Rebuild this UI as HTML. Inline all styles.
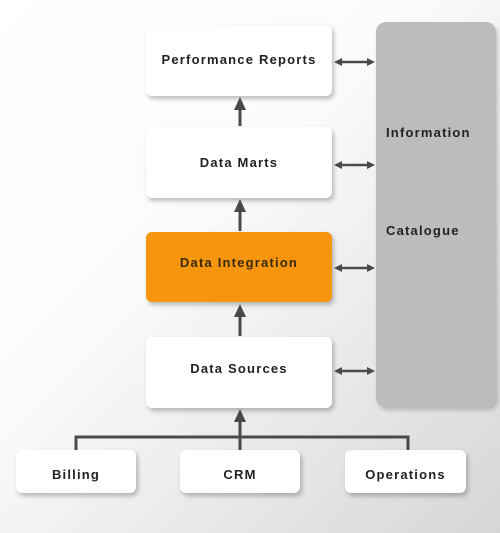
<!DOCTYPE html>
<html><head><style>
body{margin:0;width:500px;height:533px;overflow:hidden;background:linear-gradient(135deg,#ffffff 0%,#fbfbfb 40%,#d6d6d6 100%);font-family:"Liberation Sans",sans-serif;position:relative}
.b{position:absolute;background:#fff;border-radius:6px;box-shadow:2px 3px 5px rgba(0,0,0,.25);display:flex;align-items:center;justify-content:center;font-weight:bold;font-size:13px;letter-spacing:1.2px;color:#222;box-sizing:border-box}
.o{background:#f7960c;color:#3a2a10}
.g{position:absolute;left:376px;top:22px;width:120px;height:385px;background:#bcbcbc;border-radius:10px;box-shadow:2px 3px 5px rgba(0,0,0,.2)}
.t{position:absolute;left:386px;font-weight:bold;font-size:13px;letter-spacing:1.2px;color:#222}
svg{position:absolute;left:0;top:0}
</style></head><body>
<div class="b" style="left:146px;top:25px;width:186px;height:71px;padding-bottom:2px">Performance Reports</div>
<div class="b" style="left:146px;top:127px;width:186px;height:71px">Data Marts</div>
<div class="b o" style="left:146px;top:232px;width:186px;height:70px;padding-bottom:10px">Data Integration</div>
<div class="b" style="left:146px;top:337px;width:186px;height:71px;padding-bottom:8px">Data Sources</div>
<div class="b" style="left:16px;top:450px;width:120px;height:43px;padding-top:6px">Billing</div>
<div class="b" style="left:180px;top:450px;width:120px;height:43px;padding-top:6px">CRM</div>
<div class="b" style="left:345px;top:450px;width:121px;height:43px;padding-top:6px">Operations</div>
<div class="g"></div>
<div class="t" style="top:125px">Information</div>
<div class="t" style="top:223px">Catalogue</div>
<svg width="500" height="533" fill="#4a4a4a" stroke="#4a4a4a">
<g stroke-width="3" fill="none">
<path d="M240 126V108M240 231V210M240 336V315M240 450V420M76 450V437H408V450"/>
</g>
<g stroke="none">
<path d="M234 110L240 97L246 110Z"/><path d="M234 212L240 199L246 212Z"/><path d="M234 317L240 304L246 317Z"/><path d="M234 422L240 409L246 422Z"/>
</g>
<g stroke-width="2.5">
<line x1="340" y1="62" x2="370" y2="62"/><line x1="340" y1="165" x2="370" y2="165"/><line x1="340" y1="268" x2="370" y2="268"/><line x1="340" y1="371" x2="370" y2="371"/>
</g>
<g stroke="none">
<path d="M334 62L342 58V66Z M375 62L367 58V66Z"/>
<path d="M334 165L342 161V169Z M375 165L367 161V169Z"/>
<path d="M334 268L342 264V272Z M375 268L367 264V272Z"/>
<path d="M334 371L342 367V375Z M375 371L367 367V375Z"/>
</g>
</svg>
</body></html>
